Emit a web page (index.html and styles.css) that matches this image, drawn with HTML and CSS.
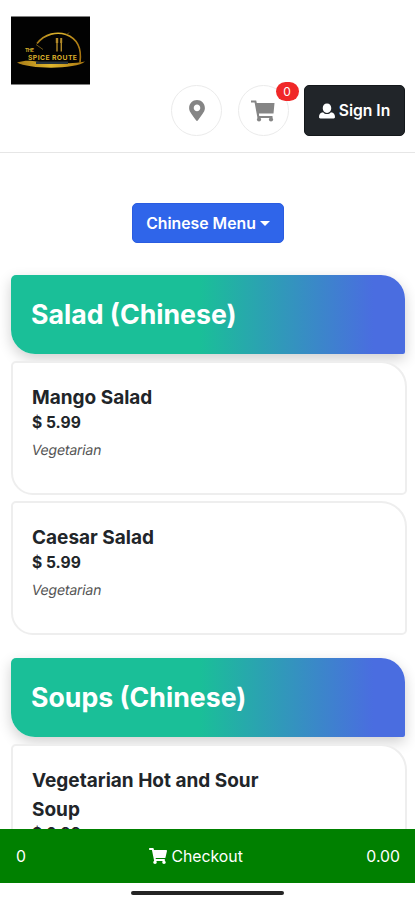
FILE: index.html
```html
<!DOCTYPE html>
<html lang="en">
<head>
<meta charset="utf-8">
<meta name="viewport" content="width=device-width, initial-scale=1">
<title>The Spice Route</title>
<link rel="stylesheet" href="styles.css">
</head>
<body>
<div class="app">
  <div class="content">
    <header class="header">
      <svg class="logo" viewBox="0 0 79 68">
        <defs>
          <linearGradient id="gold" x1="0" x2="1">
            <stop offset="0" stop-color="#a77b17"/>
            <stop offset=".5" stop-color="#e0b72e"/>
            <stop offset="1" stop-color="#a87510"/>
          </linearGradient>
        </defs>
        <rect width="79" height="68" fill="#020202"/>
        <path d="M26 27C34 17 46 15 55 18C66 22 71 31 69 46" fill="none" stroke="url(#gold)" stroke-width="1.6"/>
        <path d="M56 18l2-2M25 28l7 5" stroke="#705718" stroke-width="1"/>
        <path d="M46 24v11M50.300 24v11" stroke="#b38a29" stroke-width="1.4"/>
        <path d="M44.800 21.500h2.400v5h-2.400zM49.200 21.500h2v5h-2z" fill="#b38a29"/>
        <path d="M6 46C19 42 24 46 38 46S60 48 74 45C66 53 18 53 6 46Z" fill="url(#gold)"/>
        <path d="M25 45h32v2.500H25z" fill="#24313a"/>
        <text class="logo-the" x="14" y="35.500" textLength="9">THE</text>
        <text class="logo-name" x="17" y="43.500" textLength="49">SPICE ROUTE</text>
      </svg>
      <div class="actions">
        <button class="round" aria-label="Location">
          <svg class="pin" viewBox="0 0 384 512"><path d="M172.268 501.670C26.970 291.031 0 269.413 0 192 0 85.961 85.961 0 192 0s192 85.961 192 192c0 77.413-26.970 99.031-172.268 309.670-9.535 13.774-29.930 13.773-39.464 0zM192 272c44.183 0 80-35.817 80-80s-35.817-80-80-80-80 35.817-80 80 35.817 80 80 80z"/></svg>
        </button>
        <button class="round" aria-label="Cart">
          <svg class="cart" viewBox="0 0 24 22"><path d="M0 .500H5.200L5.800 3H23.500L22.500 13.500H7.900L8.200 16H21.500V18H6.500L3.600 2.500H0z"/><circle cx="8" cy="19.400" r="2.100"/><circle cx="20" cy="19.400" r="2.100"/></svg>
          <span class="badge">0</span>
        </button>
        <button class="signin">
          <svg class="user" viewBox="0 0 17 16"><path d="M8.500 0C11.300 0 13 2 13 4.800C13 7.600 11.200 10 8.500 10S4 7.600 4 4.800C4 2 5.700 0 8.500 0ZM4.300 9.300C5.300 10.600 6.800 11.300 8.500 11.300S11.700 10.600 12.700 9.300C15.700 9.700 17 11.700 17 14.500C17 15.500 16.500 16 15.500 16H1.500C.500 16 0 15.500 0 14.500C0 11.700 1.300 9.700 4.300 9.300Z"/></svg>
          <span>Sign In</span>
        </button>
      </div>
    </header>
    <main class="menu">
      <button class="picker">Chinese Menu<span class="caret"></span></button>
      <section class="group">
        <h2 class="banner">Salad (Chinese)</h2>
        <article class="card">
          <h3 class="name">Mango Salad</h3>
          <p class="price">$ 5.99</p>
          <p class="tag">Vegetarian</p>
        </article>
        <article class="card">
          <h3 class="name">Caesar Salad</h3>
          <p class="price">$ 5.99</p>
          <p class="tag">Vegetarian</p>
        </article>
      </section>
      <section class="group">
        <h2 class="banner">Soups (Chinese)</h2>
        <article class="card">
          <h3 class="name">Vegetarian Hot and Sour Soup</h3>
          <p class="price">$ 6.99</p>
        </article>
      </section>
    </main>
  </div>
  <footer class="checkout">
    <span class="count">0</span>
    <span class="go">
      <svg class="go-cart" viewBox="0 0 576 512"><path d="M528.120 301.319l47.273-208C578.806 78.301 567.391 64 551.990 64H159.208l-9.166-44.810C147.758 8.021 137.930 0 126.529 0H24C10.745 0 0 10.745 0 24v16c0 13.255 10.745 24 24 24h69.883l70.248 343.435C147.325 417.100 136 435.222 136 456c0 30.928 25.072 56 56 56s56-25.072 56-56c0-15.674-6.447-29.835-16.824-40h209.647C430.447 426.165 424 440.326 424 456c0 30.928 25.072 56 56 56s56-25.072 56-56c0-22.172-12.888-41.332-31.579-50.405l5.517-24.276c3.413-15.018-8.002-29.319-23.403-29.319H218.117l-6.545-32h293.145c11.206 0 20.920-7.754 23.403-18.681z"/></svg>
      <span>Checkout</span>
    </span>
    <span class="total">0.00</span>
  </footer>
  <div class="home"><span class="home-bar"></span></div>
</div>
</body>
</html>
```
FILE: styles.css
```css
* { box-sizing: border-box; }
body { margin: 0; background: #fff; color: #212529; font-family: Inter, "Liberation Sans", sans-serif; }
h2, h3, p { margin: 0; }
button { font: inherit; padding: 0; }
.app { height: 900px; display: flex; flex-direction: column; overflow: hidden; }
.content { height: 829px; flex: none; overflow: hidden; }

.header { height: 153px; padding: 16px 10px 0 11px; border-bottom: 1px solid #e6e6e6; }
.logo { display: block; width: 79px; height: 69px; }
.logo text { fill: #d9ae2b; font-weight: 700; }
.logo-the { font-size: 5px; }
.logo-name { font-size: 6.8px; }
.actions { display: flex; justify-content: flex-end; }
.round { position: relative; width: 51px; height: 51px; margin-right: 15.5px; border: 1px solid #ebebeb; border-radius: 50%; background: #fff; display: flex; align-items: center; justify-content: center; }
.round svg { fill: #858585; }
.pin { width: 16px; height: 21px; }
.cart { width: 24px; height: 22px; }
.badge { position: absolute; left: 37px; top: -4px; width: 23px; height: 19px; border-radius: 10px; background: #f02828; color: #fff; font-size: 12px; line-height: 19px; text-align: center; }
.signin { width: 101px; height: 51px; border: 1px solid #14181b; border-radius: 5px; background: #212529; color: #fff; font-size: 15.7px; font-weight: 600; display: flex; align-items: center; justify-content: center; gap: 4px; }
.user { width: 16px; height: 16px; fill: #fff; }

.menu { padding: 50px 10px 0 11px; display: flex; flex-direction: column; }
.picker { align-self: center; width: 152px; height: 40px; margin-bottom: 32px; border: 1px solid #2a5ce0; border-radius: 5px; background: #2f65ea; color: #fff; font-size: 15.8px; font-weight: 600; display: flex; align-items: center; justify-content: center; gap: 4px; }
.caret { border: 5px solid transparent; border-top-color: #fff; border-bottom: 0; }
.group { margin-bottom: 23px; }
.banner { height: 79px; margin-bottom: 7px; padding-left: 20px; border-radius: 5px 24px 2px 24px; background: linear-gradient(90deg, #1abf98 0%, #1abf98 48%, #4a6de0 92%); box-shadow: 0 5px 14px rgba(0, 0, 0, .19); color: #fff; font-size: 26.7px; font-weight: 700; line-height: 79px; }
.card { position: relative; width: 396px; height: 134px; margin: 0 -1px 6px 0; padding: 21px 120px 0 19px; border: 2px solid #eee; border-radius: 5px 26px 5px 22px; background: #fff; }
.card:last-child { margin-bottom: 0; }
.name { font-size: 19px; font-weight: 700; line-height: 28.5px; }
.price { font-size: 15.6px; font-weight: 700; line-height: 20px; }
.tag { margin-top: 8px; color: #555; font-size: 14px; letter-spacing: -.2px; line-height: 18px; transform: skewX(-10deg); }

.checkout { height: 54px; flex: none; padding: 0 15px 0 16px; background: #008000; color: #fff; font-size: 15.8px; display: flex; justify-content: space-between; align-items: center; }
.go { display: flex; align-items: center; gap: 4px; }
.go-cart { width: 18px; height: 16px; fill: #fff; }
.total { text-align: right; }
.home { height: 17px; padding-top: 8px; display: flex; justify-content: center; }
.home-bar { width: 153px; height: 4px; border-radius: 2px; background: #242424; }
```
